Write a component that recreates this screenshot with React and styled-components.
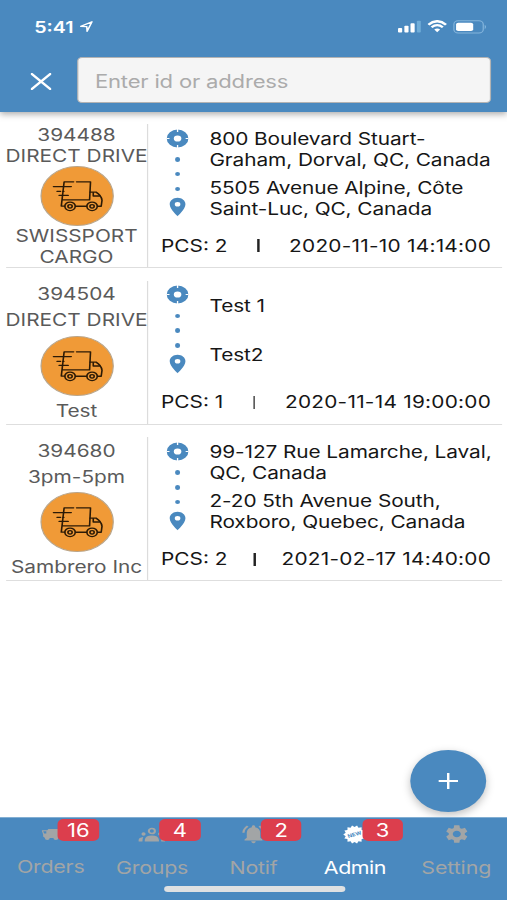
import React from "react";
import styled, { createGlobalStyle } from "styled-components";
import {
  MdNotificationsActive,
  MdLocationOn,
  MdSettings,
} from "react-icons/md";

const BLUE = "#4a89bf";

const GlobalStyle = createGlobalStyle`
  * {
    box-sizing: border-box;
  }
  body {
    margin: 0;
    width: 507px;
    height: 900px;
    overflow: hidden;
    background: #fff;
    font-family: Inter, "Liberation Sans", sans-serif;
  }
`;

// the 414pt wide phone layout, widened to fill the window
const Screen = styled.div`
  display: flex;
  flex-direction: column;
  width: 414px;
  height: 900px;
  background: #fff;
  transform: scaleX(1.22464);
  transform-origin: 0 0;
`;

const Header = styled.header`
  flex: none;
  height: 111.5px;
  background: ${BLUE};
  box-shadow: 0 2px 6px rgba(0, 0, 0, 0.35);
`;

const StatusBar = styled.div`
  display: flex;
  align-items: center;
  justify-content: space-between;
  height: 57px;
  padding: 0 16px 4px 28px;
  color: #fff;
`;

const Clock = styled.div`
  display: flex;
  align-items: center;
  gap: 5px;
  font-size: 16px;
  font-weight: 600;
`;

const StatusIcons = styled.div`
  display: flex;
  align-items: center;
  gap: 5px;
`;

const SearchRow = styled.div`
  display: flex;
  align-items: center;
  padding: 0 13px 0 25px;
`;

const CloseButton = styled.button`
  display: flex;
  width: 37.5px;
  padding: 2px 0 0;
  border: 0;
  background: none;
`;

const SearchInput = styled.input`
  width: 338.5px;
  height: 46px;
  padding: 2px 14px 0;
  border: 1px solid #b3b3b3;
  border-radius: 4px;
  outline: none;
  background: #f5f5f5;
  font-family: inherit;
  font-size: 18px;
  letter-spacing: -0.15px;
  &::placeholder {
    color: #ababab;
    opacity: 1;
  }
`;

const List = styled.main`
  flex: 1;
  display: flex;
  flex-direction: column;
  gap: 12.7px;
  padding: 12.5px 4px 0 5px;
`;

const Row = styled.article`
  display: flex;
  height: 144px;
  border-bottom: 1.5px solid #dedede;
`;

const Customer = styled.div`
  display: flex;
  flex: none;
  flex-direction: column;
  align-items: center;
  justify-content: space-around;
  width: 116px;
  padding-top: 1px;
  border-right: 1px solid #dcdcdc;
  color: #5a5a5a;
  font-size: 17px;
  line-height: 20.5px;
  text-align: center;
`;

const Line = styled.span`
  white-space: nowrap;
`;

const TruckCircle = styled.div`
  flex: none;
  width: 60px;
  height: 60px;
  border: 0.5px solid #b9a58a;
  border-radius: 50%;
  background: #f09a37;
`;

const Trip = styled.div`
  flex: 1;
  padding: 0 10.5px 0 10.5px;
  color: #161616;
  font-size: 17px;
  line-height: 20.8px;
`;

const Route = styled.div`
  display: flex;
  height: 99.5px;
`;

const Track = styled.div`
  display: flex;
  flex: none;
  flex-direction: column;
  align-items: center;
  width: 27px;
  margin-right: 12.5px;
  padding-top: 4.5px;
  color: ${BLUE};
`;

const Dot = styled.i`
  width: 4.5px;
  height: 4.5px;
  margin-bottom: 10.3px;
  border-radius: 50%;
  background: ${BLUE};
  &:first-of-type {
    margin-top: 9.5px;
  }
`;

const Pin = styled(MdLocationOn)`
  margin-top: -5px;
  font-size: 22px;
`;

const Stops = styled.div`
  display: grid;
  grid-template-rows: 1fr 1fr;
  align-items: center;
  width: 230px;
  padding-top: 1px;
  letter-spacing: -0.07px;
`;

const Stop = styled.div`
  display: flex;
  flex-direction: column;
`;

const Summary = styled.div`
  display: flex;
  align-items: center;
  justify-content: space-between;
  margin-top: 12px;
`;

const Divider = styled.span`
  width: 1.5px;
  height: 13px;
  background: #222;
`;

const PickupDate = styled.span`
  letter-spacing: 0.2px;
`;

const AddButton = styled.button`
  position: fixed;
  top: 749.5px;
  left: 334.6px;
  display: flex;
  align-items: center;
  justify-content: center;
  width: 62px;
  height: 62px;
  padding: 0;
  border: 0;
  border-radius: 50%;
  background: ${BLUE};
  box-shadow: 0 3px 8px rgba(0, 0, 0, 0.25);
`;

const TabBar = styled.nav`
  position: relative;
  display: flex;
  flex: none;
  height: 83.5px;
  border-top: 1px solid #83afd3;
  background: ${BLUE};
`;

const Tab = styled.a`
  position: relative;
  display: flex;
  flex: 1;
  flex-direction: column;
  align-items: center;
  padding-top: 7px;
  color: ${(p) => (p.$active ? "#fff" : "#a2a5a6")};
  font-size: 17.5px;
`;

const TabIcon = styled.span`
  display: flex;
  align-items: center;
  justify-content: center;
  height: 19px;
`;

const TabLabel = styled.span`
  margin-top: ${(p) => (p.$raised ? 12 : 13)}px;
  line-height: 22px;
  letter-spacing: ${(p) => p.$spacing || 0}px;
`;

const Badge = styled.span`
  position: absolute;
  top: 1px;
  left: 47.3px;
  width: 33.5px;
  height: 22px;
  border-radius: 5px;
  background: #dc3e4d;
  color: #fff;
  font-size: 18px;
  line-height: 23px;
  text-align: center;
`;

const HomeIndicator = styled.div`
  position: absolute;
  top: 68px;
  left: 133.5px;
  width: 148px;
  height: 6px;
  border-radius: 3px;
  background: #dfe1e2;
`;

const LocationArrow = () => (
  <svg width="11" height="13" viewBox="0 0 12 13" fill="none">
    <path
      d="M1 6.3 11 1.3 6.7 11.8 6.4 6.6Z"
      stroke="#fff"
      strokeWidth="1.4"
      strokeLinejoin="round"
    />
  </svg>
);

const Signal = () => (
  <svg width="19" height="13" viewBox="0 0 19 13" fill="#fff">
    <rect x="0" y="8" width="3.4" height="4.6" rx="0.8" />
    <rect x="5.2" y="5.7" width="3.4" height="6.9" rx="0.8" />
    <rect x="10.2" y="3.2" width="3.4" height="9.4" rx="0.8" />
    <rect x="15.4" y="0.8" width="3.2" height="11.8" rx="0.8" fill="#70add8" />
  </svg>
);

const Wifi = () => (
  <svg width="16" height="13" viewBox="0 0 16 13" fill="none" stroke="#fff">
    <path d="M0.8 4.7Q8-2.3 15.2 4.7" strokeWidth="2.3" />
    <path d="M3.4 7.3Q8 3.1 12.6 7.3" strokeWidth="2.1" />
    <path d="M5.6 9.6Q8 7.6 10.4 9.6L8 12.3Z" fill="#fff" stroke="none" />
  </svg>
);

const Battery = () => (
  <svg width="28" height="14" viewBox="0 0 28 14">
    <rect
      x="0.6"
      y="0.8"
      width="24"
      height="12.2"
      rx="3.5"
      fill="none"
      stroke="#84b5dc"
    />
    <rect x="2.4" y="2.8" width="14" height="8.2" rx="1.8" fill="#fff" />
    <path d="M25.8 4.8Q28 7 25.8 9.2Z" fill="#84b5dc" />
  </svg>
);

const Truck = () => (
  <svg
    viewBox="0 0 60 60"
    fill="none"
    stroke="#2b1a06"
    strokeWidth="1.35"
    strokeLinecap="round"
    strokeLinejoin="round"
  >
    <path d="M10 20.3H25M13 25.2H16M18 25.2H18.8M14.8 29.4H22.4" />
    <path d="M27 15.3H19L16.6 40.5H19.5M29.5 15.3H41.3L40.5 34H17.5" />
    <path d="M41 26H46Q50.6 29.5 51 34.5L50.3 40.6H47.3M28.7 40.6H38" />
    <path d="M43.6 26.5V30H48.8" />
    <circle cx="24" cy="40.7" r="4.4" />
    <circle cx="24" cy="40.7" r="1.8" />
    <circle cx="42.6" cy="40.7" r="4.4" />
    <circle cx="42.6" cy="40.7" r="1.8" />
  </svg>
);

const Target = () => (
  <svg width="18" height="19" viewBox="0 0 18 19" fill="none">
    <circle cx="9" cy="9.5" r="6" stroke={BLUE} strokeWidth="5.8" />
    <path
      d="M9 0V3M9 16V19M0 9.5H2.4M15.6 9.5H18"
      stroke="#fff"
      strokeWidth="1.1"
    />
  </svg>
);

const VanIcon = () => (
  <svg width="15" height="13" viewBox="0 0 15 13" fill="#a2a5a6">
    <path d="M5.5 1H15V10H2.8L1.2 8.5V6.2L0 2.2H4.6Z" />
    <path d="M1.3 3.2H3.8V5.6H2Z" fill={BLUE} />
    <circle cx="4.6" cy="10" r="2" />
    <circle cx="11.6" cy="10" r="2" />
  </svg>
);

const GroupIcon = () => (
  <svg width="22" height="19" viewBox="0 0 22 19" fill="#a2a5a6">
    <circle
      cx="11"
      cy="6"
      r="2.5"
      fill="none"
      stroke="#a2a5a6"
      strokeWidth="1.7"
    />
    <circle cx="4.2" cy="9" r="1.7" />
    <circle cx="17.8" cy="9" r="1.7" />
    <path d="M5.2 16.5V15Q5.6 10.6 11 10.6T16.8 15V16.5Z" />
    <path d="M0 16.5V15Q.3 12.6 4 12Q3.3 13.5 3.3 16.5ZM22 16.5V15Q21.7 12.6 18 12Q18.7 13.5 18.7 16.5Z" />
  </svg>
);

const burst = Array.from({ length: 28 }, (_, i) => {
  const r = i % 2 ? 7.4 : 9.2;
  const a = (i * Math.PI) / 14;
  return `${9.5 + r * Math.cos(a)},${9.5 + r * Math.sin(a)}`;
}).join(" ");

const BurstIcon = () => (
  <svg width="19" height="19" viewBox="0 0 19 19">
    <polygon points={burst} fill="#fff" />
    <text
      x="9.5"
      y="11.2"
      fill={BLUE}
      fontSize="4.8"
      fontWeight="700"
      textAnchor="middle"
      transform="rotate(-20 9.5 9.5)"
    >
      NEW
    </text>
  </svg>
);

const orders = [
  {
    id: "394488",
    slot: "DIRECT DRIVE",
    name: ["SWISSPORT", "CARGO"],
    from: ["800 Boulevard Stuart-", "Graham, Dorval, QC, Canada"],
    to: ["5505 Avenue Alpine, Côte", "Saint-Luc, QC, Canada"],
    pcs: 2,
    date: "2020-11-10 14:14:00",
  },
  {
    id: "394504",
    slot: "DIRECT DRIVE",
    name: ["Test"],
    from: ["Test 1"],
    to: ["Test2"],
    pcs: 1,
    date: "2020-11-14 19:00:00",
  },
  {
    id: "394680",
    slot: "3pm-5pm",
    name: ["Sambrero Inc"],
    from: ["99-127 Rue Lamarche, Laval,", "QC, Canada"],
    to: ["2-20 5th Avenue South,", "Roxboro, Quebec, Canada"],
    pcs: 2,
    date: "2021-02-17 14:40:00",
  },
];

const tabs = [
  { label: "Orders", icon: <VanIcon />, count: 16, raised: true, spacing: -0.2 },
  { label: "Groups", icon: <GroupIcon />, count: 4, spacing: -0.2 },
  { label: "Notif", icon: <MdNotificationsActive size={22} />, count: 2, spacing: -0.2 },
  { label: "Admin", icon: <BurstIcon />, count: 3, active: true, spacing: -0.4 },
  { label: "Setting", icon: <MdSettings size={22} />, spacing: -0.1 },
];

const Order = ({ order }) => (
  <Row>
    <Customer>
      <Line>{order.id}</Line>
      <Line>{order.slot}</Line>
      <TruckCircle>
        <Truck />
      </TruckCircle>
      {order.name.map((n) => (
        <Line key={n}>{n}</Line>
      ))}
    </Customer>
    <Trip>
      <Route>
        <Track>
          <Target />
          <Dot />
          <Dot />
          <Dot />
          <Pin />
        </Track>
        <Stops>
          {[order.from, order.to].map((stop) => (
            <Stop key={stop[0]}>
              {stop.map((l) => (
                <Line key={l}>{l}</Line>
              ))}
            </Stop>
          ))}
        </Stops>
      </Route>
      <Summary>
        <Line>PCS: {order.pcs}</Line>
        <Divider />
        <PickupDate>{order.date}</PickupDate>
      </Summary>
    </Trip>
  </Row>
);

const App = () => (
  <>
    <GlobalStyle />
    <Screen>
      <Header>
        <StatusBar>
          <Clock>
            5:41 <LocationArrow />
          </Clock>
          <StatusIcons>
            <Signal />
            <Wifi />
            <Battery />
          </StatusIcons>
        </StatusBar>
        <SearchRow>
          <CloseButton aria-label="Close">
            <svg width="17" height="17" viewBox="0 0 17 17">
              <path
                d="M1 1 16 16M16 1 1 16"
                stroke="#fff"
                strokeWidth="2.2"
                strokeLinecap="round"
              />
            </svg>
          </CloseButton>
          <SearchInput placeholder="Enter id or address" />
        </SearchRow>
      </Header>
      <List>
        {orders.map((o) => (
          <Order key={o.id} order={o} />
        ))}
      </List>
      <AddButton aria-label="Add">
        <svg width="16" height="16" viewBox="0 0 16 16">
          <path d="M8 0V16M0 8H16" stroke="#fff" strokeWidth="2" />
        </svg>
      </AddButton>
      <TabBar>
        {tabs.map((t) => (
          <Tab key={t.label} $active={t.active}>
            <TabIcon>{t.icon}</TabIcon>
            {t.count && <Badge>{t.count}</Badge>}
            <TabLabel $raised={t.raised} $spacing={t.spacing}>
              {t.label}
            </TabLabel>
          </Tab>
        ))}
        <HomeIndicator />
      </TabBar>
    </Screen>
  </>
);

export default App;
